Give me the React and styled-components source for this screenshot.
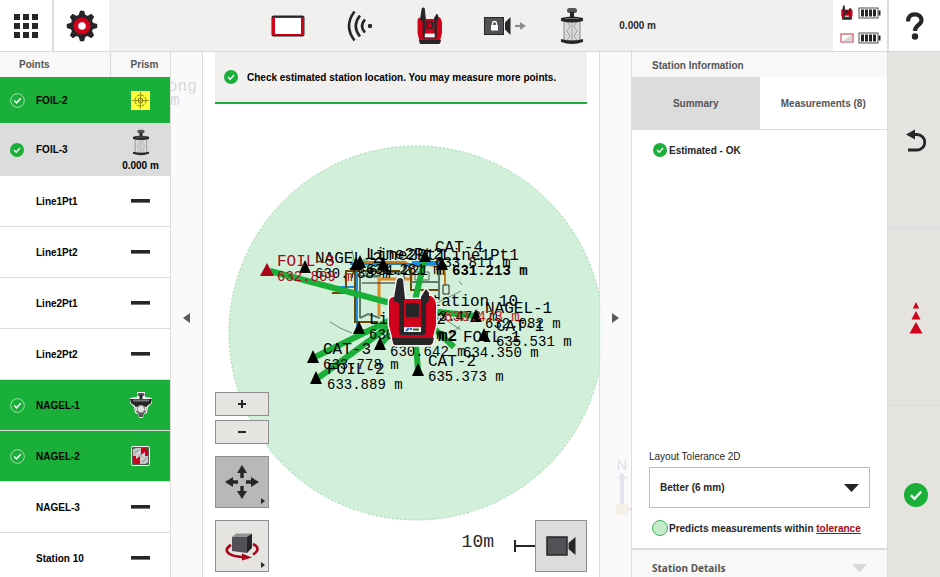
import React from 'react'
import styled, { createGlobalStyle } from 'styled-components'

const GREEN = '#1aaf38'
const RED = '#d0021b'
const DARK = '#262628'

const points = [
  { name: 'FOIL-2', state: 'measured', prism: 'foil' },
  { name: 'FOIL-3', state: 'selected', prism: 'cylinder', height: '0.000 m' },
  { name: 'Line1Pt1' },
  { name: 'Line1Pt2' },
  { name: 'Line2Pt1' },
  { name: 'Line2Pt2' },
  { name: 'NAGEL-1', state: 'measured', prism: 'mini' },
  { name: 'NAGEL-2', state: 'measured', prism: 'plate' },
  { name: 'NAGEL-3' },
  { name: 'Station 10' },
]

const labels = [
  { name: 'NAGEL-2', value: '630.788 m', x: 315, y: 263 },
  { name: 'Line2Pt2', value: '631.281 m', x: 366, y: 259 },
  { name: 'Line2Pt1', value: '631.221 m', x: 369, y: 260 },
  { name: 'CAT-4', value: '633.811 m', x: 435, y: 252 },
  { name: 'Line1Pt1', value: '', x: 442, y: 260 },
  { name: '', value: '631.213 m', x: 452, y: 260, strong: true },
  { name: 'Line1Pt2', value: '630.642 m', x: 369, y: 324 },
  { name: 'Station 10', value: '633.473 m', x: 422, y: 306 },
  { name: 'NAGEL-1', value: '632.082 m', x: 485, y: 313 },
  { name: 'CAT-1', value: '635.531 m', x: 496, y: 331 },
  { name: 'FOIL-1', value: '634.350 m', x: 463, y: 342 },
  { name: 'm2', value: '', x: 438, y: 341, strong: true },
  { name: '', value: '630.642 m', x: 390, y: 341 },
  { name: 'CAT-2', value: '635.373 m', x: 428, y: 366 },
  { name: 'CAT-3', value: '633.778 m', x: 323, y: 354 },
  { name: 'FOIL-2', value: '633.889 m', x: 327, y: 374 },
  { name: 'FOIL-3', value: '632.809 m', x: 277, y: 266, color: '#a8071a' },
  { name: '', value: '633.473 m', x: 444, y: 306, color: '#c0202a' },
]

// x is the centre of the marker, y its base line
const markers = [
  [305, 273], [356, 270], [360, 268], [383, 270], [425, 262], [442, 270],
  [476, 322], [484, 341], [418, 376], [380, 350], [359, 334], [313, 363], [316, 384],
]

const sights = [
  [270, 271], [313, 358], [318, 378], [418, 370], [425, 258], [474, 316], [454, 347], [380, 345],
]

const GridIcon = () => (
  <svg width="26" height="26" viewBox="0 0 26 26" fill={DARK} aria-hidden="true">
    {[1, 10, 19].map(y => [1, 10, 19].map(x => <rect key={x + '-' + y} x={x} y={y} width="6" height="6" />))}
  </svg>
)

const GearIcon = () => (
  <svg width="32" height="32" viewBox="-16 -16 32 32" aria-hidden="true">
    {[0, 45, 90, 135, 180, 225, 270, 315].map(a => (
      <path key={a} d="M-3.6-10L-2-15.2H2L3.6-10Z" fill={DARK} transform={`rotate(${a})`} />
    ))}
    <circle r="11.4" fill={DARK} />
    <circle r="8.6" fill={RED} />
    <circle r="3.8" fill="#fff" />
  </svg>
)

const TabletIcon = () => (
  <svg width="34" height="22" viewBox="0 0 34 22" aria-hidden="true">
    <rect x=".5" y=".5" width="33" height="21" rx="2" fill={DARK} />
    <rect x="1" y="2" width="32" height="18" rx="1" fill={RED} />
    <rect x="4" y="3" width="26" height="16" fill="#fff" />
  </svg>
)

const SignalIcon = () => (
  <svg width="26" height="32" viewBox="0 0 26 32" fill="none" stroke={DARK} strokeWidth="2.6" aria-hidden="true">
    <path d="M7.500 1.500Q-3.500 16 7.500 30.500" />
    <path d="M13 5.500Q4.500 16 13 26.500" />
    <path d="M18 9.500Q12 16 18 22.500" />
    <circle cx="23" cy="16" r="2.200" fill={DARK} stroke="none" />
  </svg>
)

const DeviceShape = () => (
  <>
    <path d="M1 26Q1 20 6 20H16V22H34V19L43 19Q48 22 48 28V48L45 60V65Q44 68 41 68H8Q5 68 5 65L4 60L1 48Z" fill={RED} />
    <path d="M6 21L9 3Q10 1 12 1Q15 1 15 3L17 22V51H33V20L36 15L38 12L41 16V23L38 27V55Q38 58 35 58H14Q11 58 11 55V26L6 24Z" fill={DARK} />
    <path d="M16 23H33V50H16Z" fill={RED} />
    <rect x="18" y="26" width="13" height="14" rx="1" fill={DARK} />
    <path d="M4 61H46L45 65Q44 68 41 68H8Q5 68 5 65Z" fill={DARK} />
    <rect x="16" y="50" width="17" height="5" fill="#f4f4f4" />
  </>
)

const DeviceIcon = () => (
  <svg width="26" height="38" viewBox="0 0 50 70" preserveAspectRatio="none" aria-hidden="true">
    <DeviceShape />
    <path d="M21 29h7v8h-7z" fill={RED} />
    <rect x="15" y="49" width="19" height="7" fill="#f4f4f4" />
  </svg>
)

const LockedCameraIcon = () => (
  <svg width="42" height="20" viewBox="0 0 42 20" aria-hidden="true">
    <rect x=".5" y="1.500" width="19" height="17" fill="#535156" stroke={DARK} />
    <path d="M21 6.500L26.500 1V19L21 13.500Z" fill={DARK} />
    <rect x="7" y="9" width="7" height="5.500" fill="#fff" />
    <path d="M8.500 9V7.500a2 2 0 0 1 4 0V9" fill="none" stroke="#fff" strokeWidth="1.300" />
    <path d="M31 10h6" stroke="#8d8d8d" strokeWidth="2.200" />
    <path d="M36 6l6 4-6 4z" fill="#8d8d8d" />
  </svg>
)

const CylinderPrism = ({ width, height }) => (
  <svg width={width} height={height} viewBox="0 0 22 38" preserveAspectRatio="none" aria-hidden="true">
    <rect x="6" y="1" width="10" height="5" rx="2.500" fill="#555459" />
    <rect x="9" y="5" width="4" height="7" fill={DARK} />
    <rect x="3" y="13" width="16" height="21" fill="#d8d8d8" stroke="#8a8a8a" />
    <path d="M6 14l3 5-3 5 3 5-3 4M11 13v20M16 14l-3 5 3 5-3 5 3 4" fill="none" stroke="#a5a5a5" />
    <path d="M0 11Q11 8 22 11V14Q11 17 0 14Z" fill={DARK} />
    <path d="M0 32Q11 35 22 32V35Q11 39 0 35Z" fill={DARK} />
    <path d="M4 11.500h14" stroke="#6b6b6f" />
  </svg>
)

const FoilPrism = () => (
  <svg width="19" height="19" viewBox="0 0 19 19" fill="none" stroke="#77740e" aria-hidden="true">
    <rect x=".5" y=".5" width="18" height="18" fill="#ffff3c" stroke="#fdfdd0" />
    <circle cx="9.500" cy="9.500" r="5.500" strokeDasharray="3 1.300" />
    <circle cx="9.500" cy="9.500" r="2.500" />
    <path d="M9.500 1v17M1 9.500h17" strokeWidth=".7" />
  </svg>
)

const MiniPrism = () => (
  <svg width="24" height="26" viewBox="0 0 24 26" aria-hidden="true">
    <path d="M8 0h8v5l7 1v5l-4 4-1 6-3 1-1 4h-4l-1-4-3-1-1-6-4-4V6l7-1z" fill="#f3f3f3" />
    <rect x="8.500" y="1" width="7" height="3" rx="1.500" fill="#555459" />
    <rect x="10.500" y="3" width="3" height="5" fill={DARK} />
    <path d="M1 7l8 0h6l8 0-1 4-4 3H6l-4-3z" fill={DARK} />
    <path d="M4 8.500h16" stroke="#77767a" strokeWidth="2" />
    <path d="M6 14h12l-1 6-2 1-1 4h-4l-1-4-2-1z" fill="#56555a" />
    <path d="M6 15l2 0v4l-1 0zM18 15l-2 0v4l1 0z" fill="#ddd" />
    <circle cx="12" cy="17" r="3.600" fill="#e3e3e3" stroke="#999" />
  </svg>
)

const PlatePrism = () => (
  <svg width="19" height="20" viewBox="0 0 19 20" aria-hidden="true">
    <rect width="19" height="20" rx="2" fill="#f4f4f4" />
    <rect x="1" y="1" width="17" height="18" rx="1" fill="#5d5555" />
    <rect x="2" y="2" width="15" height="16" fill="#c4c4c4" />
    <path d="M10 2h7v8h-7zM2 10h7v8H2z" fill={RED} />
    <path d="M5 8l4-3v5l-4 3zM10 9l4-3v5l-4 4z" fill="#d5d5d5" />
    <path d="M4 7a7 7 0 0 1 4-3M15 12a7 7 0 0 1-4 4M7 9l2 2M9 8l3 4" fill="none" stroke="#888" strokeWidth=".8" />
    <path d="M1 1h3v2H1zM15 1h3v2h-3zM1 17h3v2H1zM15 17h3v2h-3z" fill="#3c6b45" />
  </svg>
)

const prisms = {
  foil: <FoilPrism />,
  cylinder: <CylinderPrism width="16" height="27" />,
  mini: <MiniPrism />,
  plate: <PlatePrism />,
}

const CheckDot = ({ size = 14, outline }) => (
  <svg width={size} height={size} viewBox="0 0 16 16" aria-hidden="true">
    <circle cx="8" cy="8" r={outline ? 7.3 : 8} fill={GREEN} stroke={outline ? '#a9e3b3' : 'none'} strokeWidth="1" />
    <path d="M4.600 8.100l2.400 2.400 4.500-4.800" fill="none" stroke="#fff" strokeWidth="1.600" />
  </svg>
)

const BatteryIcon = () => (
  <svg width="23" height="12" viewBox="0 0 23 12" aria-hidden="true">
    <rect x="1" y="1" width="19" height="10" fill="#fff" stroke="#515151" />
    <path d="M20.500 3.500h2v5h-2z" fill={DARK} />
    <path d="M3 2.500h3v7H3zM7 2.500h3v7H7zM11 2.500h3v7h-3zM15 2.500h3v7h-3z" fill={DARK} />
  </svg>
)

const HelpIcon = () => (
  <svg width="20" height="28" viewBox="0 0 20 28" aria-hidden="true">
    <path d="M3 9.500C3 4.500 6 2.300 9.700 2.300S16.500 4.500 16.500 8.200C16.500 13 10 13 10 19" fill="none" stroke={DARK} strokeWidth="4.200" />
    <circle cx="10" cy="24.500" r="3.200" fill={DARK} />
  </svg>
)

const UndoIcon = () => (
  <svg width="20" height="24" viewBox="0 0 20 24" aria-hidden="true">
    <path d="M6 5.500H11a7.500 7.500 0 0 1 0 15.500H2" fill="none" stroke={DARK} strokeWidth="2.800" />
    <path d="M0 5.500L9 0.500V10.500Z" fill={DARK} />
  </svg>
)

const LayoutIcon = () => (
  <svg width="14" height="32" viewBox="0 0 14 32" fill={RED} aria-hidden="true">
    <path d="M7 0l3.200 6.500H3.800zM7 9l4.500 8.500h-9zM7 20l6.500 11.500H.5z" />
  </svg>
)

const PanIcon = () => (
  <svg width="36" height="36" viewBox="-18 -18 36 36" fill={DARK} aria-hidden="true">
    {[0, 90, 180, 270].map(a => (
      <path key={a} d="M0-17L5-9H1.700V-4H-1.700V-9H-5Z" transform={`rotate(${a})`} />
    ))}
  </svg>
)

const OrbitIcon = () => (
  <svg width="34" height="30" viewBox="0 0 34 30" aria-hidden="true">
    <path d="M6 14C-1 18 1 23 10 25L20 26.500" fill="none" stroke="#a8071a" strokeWidth="2.600" />
    <path d="M28 13C34 16 34 20 28 23.500" fill="none" stroke="#a8071a" strokeWidth="2.600" />
    <path d="M17 22.500l10 4-10 3z" fill="#a8071a" />
    <path d="M7 6l4-3.500h16L22 6z" fill="#939295" />
    <path d="M7 6h15v16L7 20z" fill="#535156" />
    <path d="M22 6l5-3.500V17l-5 5z" fill={DARK} />
  </svg>
)

const CameraIcon = () => (
  <svg width="30" height="20" viewBox="0 0 30 20" aria-hidden="true">
    <rect x="1" y="1" width="20" height="18" fill="#535156" stroke={DARK} strokeWidth="1.500" />
    <path d="M22.500 7L29.500 1V19L22.500 13Z" fill={DARK} />
  </svg>
)

const SitePlan = () => (
  <Plan viewBox="171 52 460 525" preserveAspectRatio="xMidYMid slice" role="img" aria-label="Site plan">
    <circle cx="416" cy="333" r="187" fill="#d2f0d9" stroke="#9dd6a8" strokeDasharray="2 2" />
    <g fill="none">
      <path d="M355 262H405L410 265H428L440 267Q445 269 445 274V285" stroke="#d07a1c" strokeWidth="2" />
      <path d="M379 316V279H411V270" stroke="#e08a2a" strokeWidth="3" />
      <path d="M350 264H440M357 264V330H372M335 287H357M412 262H440" stroke="#1a8fe0" strokeWidth="2" />
      <path d="M352 260H368M356 266H380" stroke="#22b04a" />
      <path d="M355 267V322H378M346 289V271H400M332 293H345V288M411 269V290H439" stroke="#6b4a08" strokeWidth="2" />
      <path d="M360 266V318M439 265V300M411 282H439M360 276H380V266M360 318L368 314L380 318" stroke="#5f7a68" strokeWidth="2" />
      <path d="M330 322L340 328L352 333M437 303L461 291M437 314L461 330M459 281L462 285M460 326L450 335M352 250L354 260" stroke="#6d8c76" />
      <path d="M362 283H398M404 264V292M385 272H405M443 285h6v9h-6z" stroke={DARK} />
      <path d="M366 270h12v7h-12zM386 264h20v10h-20zM415 272h14v8h-14z" stroke="#467055" />
    </g>
    <g stroke={GREEN} strokeWidth="6">
      {sights.map(([x, y]) => <line key={x + '-' + y} x1="413" y1="309" x2={x} y2={y} />)}
    </g>
    <path d="M267 263l7 13h-14z" fill="#a8071a" />
    {markers.map(([x, y]) => <path key={x + '-' + y} d={`M${x} ${y - 13}l6 13h-12z`} />)}
    {labels.map((l, i) => (
      <g key={i} fill={l.color || '#000'}>
        <PointName x={l.x} y={l.y} $strong={l.strong}>{l.name}</PointName>
        <PointValue x={l.x} y={l.y + 15} $strong={l.strong}>{l.value}</PointValue>
      </g>
    ))}
    <svg x="387" y="276" width="52" height="72" viewBox="-1 -1 52 72">
      <g stroke="#f2f2f2" strokeWidth="3" strokeLinejoin="round"><DeviceShape /></g>
      <DeviceShape />
      <path d="M18 54l3-3M22 52h2" stroke="#1a6fd0" strokeWidth="2" />
      <path d="M25 52.500h6" stroke="#1b6b2c" strokeWidth="2" />
    </svg>
    <PointName x="168" y="91">ong</PointName>
    <PointName x="170" y="105">m</PointName>
    <North x="622" y="470">N</North>
    <path d="M622 472l5 7h-3v26h-4v-26h-3z" fill="#6a6aa8" />
    <path d="M616 504h12v11h-12z" fill="#d8b878" />
    <path d="M628 509h5" stroke="#d0405a" strokeWidth="3" />
  </Plan>
)

const App = () => {
  return (
    <>
      <GlobalStyle />
      <Page>
        <TopBar>
          <TopButton aria-label="Menu"><GridIcon /></TopButton>
          <TopButton aria-label="Settings" $wide><GearIcon /></TopButton>
          <Status>
            <TabletIcon />
            <SignalIcon />
            <DeviceIcon />
            <LockedCameraIcon />
            <CylinderPrism width="22" height="38" />
            <Height>0.000 m</Height>
          </Status>
          <Batteries>
            <svg width="12" height="15" viewBox="0 0 50 70" preserveAspectRatio="none" aria-hidden="true"><DeviceShape /></svg>
            <BatteryIcon />
            <svg width="14" height="10" viewBox="0 0 14 10" aria-hidden="true">
              <rect x="1" y="1" width="12" height="8" fill="#fff" stroke="#c23345" />
              <path d="M2 8.500L12 2V8.500Z" fill="#d5d5d5" />
            </svg>
            <BatteryIcon />
          </Batteries>
          <HelpButton aria-label="Help"><HelpIcon /></HelpButton>
        </TopBar>
        <Main>
          <PointPanel>
            <PointTable>
              <thead>
                <tr>
                  <HeadCell>Points</HeadCell>
                  <HeadCell $prism>Prism</HeadCell>
                </tr>
              </thead>
              <tbody>
                {points.map(p => (
                  <PointRow key={p.name} $state={p.state}>
                    <td>
                      <NameCell>
                        <Mark>{p.state && <CheckDot outline={p.state === 'measured'} size={p.state === 'measured' ? 15 : 14} />}</Mark>
                        {p.name}
                      </NameCell>
                    </td>
                    <td>
                      <PrismCell>
                        {p.prism ? prisms[p.prism] : <Dash />}
                        {p.height}
                      </PrismCell>
                    </td>
                  </PointRow>
                ))}
              </tbody>
            </PointTable>
          </PointPanel>
          <Stage>
            <SitePlan />
            <Strip $side="right" aria-label="Collapse point list">
              <svg width="7" height="10" viewBox="0 0 7 10" aria-hidden="true"><path d="M7 0v10L0 5z" fill="#5a5a5a" /></svg>
            </Strip>
            <MapArea>
              <Notice role="status">
                <CheckDot />
                Check estimated station location. You may measure more points.
              </Notice>
              <Tools>
                <ToolColumn>
                  <ZoomButton aria-label="Zoom in">
                    <svg width="10" height="10" viewBox="0 0 10 10" aria-hidden="true"><path d="M1 5h8M5 1v8" stroke={DARK} strokeWidth="2" /></svg>
                  </ZoomButton>
                  <ZoomButton aria-label="Zoom out">
                    <svg width="10" height="10" viewBox="0 0 10 10" aria-hidden="true"><path d="M1 5h8" stroke={DARK} strokeWidth="2" /></svg>
                  </ZoomButton>
                  <ToolButton aria-label="Pan" $active $more><PanIcon /></ToolButton>
                  <ToolButton aria-label="Orbit" $more><OrbitIcon /></ToolButton>
                </ToolColumn>
                <ScaleGroup>
                  <ScaleText>10m</ScaleText>
                  <svg width="21" height="12" viewBox="0 0 21 12" aria-hidden="true"><path d="M1 0v12M1 6h20" stroke={DARK} strokeWidth="2" /></svg>
                  <CameraButton aria-label="Camera"><CameraIcon /></CameraButton>
                </ScaleGroup>
              </Tools>
            </MapArea>
            <Strip $side="left" aria-label="Collapse station information">
              <svg width="7" height="10" viewBox="0 0 7 10" aria-hidden="true"><path d="M0 0v10l7-5z" fill="#5a5a5a" /></svg>
            </Strip>
          </Stage>
          <InfoPanel>
            <InfoTitle>Station Information</InfoTitle>
            <Tabs role="tablist">
              <Tab role="tab" aria-selected="true" $active>Summary</Tab>
              <Tab role="tab" aria-selected="false">Measurements (8)</Tab>
            </Tabs>
            <Summary>
              <Result><CheckDot />Estimated - OK</Result>
              <Tolerance>
                <label htmlFor="tolerance">Layout Tolerance 2D</label>
                <SelectBox>
                  <Select id="tolerance" defaultValue="better">
                    <option value="better">Better (6 mm)</option>
                  </Select>
                  <svg width="15" height="8" viewBox="0 0 15 8" aria-hidden="true"><path d="M0 0h15L7.500 8z" fill={DARK} /></svg>
                </SelectBox>
              </Tolerance>
              <Prediction>
                <Ring />
                <span>Predicts measurements within <a href="#tolerance">tolerance</a></span>
              </Prediction>
            </Summary>
            <Details>
              Station Details
              <svg width="15" height="8" viewBox="0 0 15 8" aria-hidden="true"><path d="M0 0h15L7.500 8z" fill="#d8d8d8" /></svg>
            </Details>
          </InfoPanel>
          <Rail>
            <RailButton aria-label="Back"><UndoIcon /></RailButton>
            <RailButton aria-label="Layout"><LayoutIcon /></RailButton>
            <RailButton aria-label="Confirm"><CheckDot size={24} /></RailButton>
          </Rail>
        </Main>
      </Page>
    </>
  )
}

const GlobalStyle = createGlobalStyle`
  * {
    box-sizing: border-box;
  }
  body {
    margin: 0;
    overflow: hidden;
    background: #fff;
    color: ${DARK};
    font: bold 10px "Liberation Sans", Arial, sans-serif;
  }
  button {
    padding: 0;
    border: 0;
    background: none;
    color: inherit;
    font: inherit;
  }
  svg {
    display: block;
    flex: none;
  }
`
const Page = styled.div`
    height: 100vh;
    display: flex;
    flex-direction: column;
`
const TopBar = styled.header`
    flex: none;
    height: 52px;
    display: flex;
    background: #f2f0ef;
    border-bottom: 1px solid #d9d9d9;
`
const TopButton = styled.button`
    width: ${p => (p.$wide ? '55px' : '54px')};
    display: flex;
    align-items: center;
    justify-content: center;
    background: #fff;
    border-right: ${p => (p.$wide ? '0' : '2px solid #dcdcdc')};
`
const Status = styled.div`
    flex: 1;
    display: grid;
    grid-template-columns: 72px 72px 68px 82px 52px 58px;
    align-items: center;
    justify-items: center;
    justify-content: center;
    padding-right: 34px;
`
const Height = styled.span`
    justify-self: end;
`
const Batteries = styled.div`
    width: 54px;
    display: grid;
    grid-template-columns: 14px 23px;
    align-content: space-between;
    justify-content: center;
    align-items: center;
    justify-items: center;
    column-gap: 4px;
    padding: 5px 0 7px;
    background: #fff;
`
const HelpButton = styled.button`
    width: 53px;
    display: flex;
    align-items: center;
    justify-content: center;
    background: #fff;
    border-left: 2px solid #dcdcdc;
`
const Main = styled.main`
    flex: 1;
    min-height: 0;
    display: flex;
`
const PointPanel = styled.section`
    flex: none;
    width: 171px;
    overflow: hidden;
    border-right: 1px solid #dcdcdc;
`
const PointTable = styled.table`
    width: 100%;
    table-layout: fixed;
    border-collapse: separate;
    border-spacing: 0;
    td {
      padding: 0;
      border-bottom: 1px solid #dcdcdc;
    }
`
const HeadCell = styled.th`
    width: ${p => (p.$prism ? '59px' : '111px')};
    height: 25px;
    padding: ${p => (p.$prism ? '0 0 0 8px' : '0 0 0 19px')};
    background: #f8f8f8;
    border-right: ${p => (p.$prism ? '0' : '1px solid #dcdcdc')};
    color: #555;
    text-align: ${p => (p.$prism ? 'center' : 'left')};
`
const rowColor = { measured: GREEN, selected: '#dcdcdc' }
const PointRow = styled.tr`
    height: 51px;
    background: ${p => rowColor[p.$state] || '#fff'};
    color: #000;
    &:first-child {
      height: 47px;
    }
    &:nth-child(2) {
      height: 52px;
    }
`
const NameCell = styled.div`
    display: flex;
    align-items: center;
`
const Mark = styled.span`
    width: 36px;
    padding-left: 10px;
`
const PrismCell = styled.div`
    display: flex;
    flex-direction: column;
    align-items: center;
    gap: 4px;
`
const Dash = styled.span`
    width: 19px;
    height: 4px;
    background: ${DARK};
    border-bottom: 1px solid #777;
`
const Stage = styled.section`
    flex: 1;
    min-width: 0;
    display: flex;
    position: relative;
    overflow: hidden;
`
const Plan = styled.svg`
    position: absolute;
    inset: 0;
    width: 100%;
    height: 100%;
`
const PointName = styled.text`
    font: 16px "Liberation Mono", monospace;
    font-weight: ${p => (p.$strong ? 'bold' : 'normal')};
`
const PointValue = styled.text`
    font: 14px "Liberation Mono", monospace;
    font-weight: ${p => (p.$strong ? 'bold' : 'normal')};
`
const North = styled.text`
    font: bold 15px "Liberation Sans", sans-serif;
    fill: #6a6aa8;
    text-anchor: middle;
`
const Strip = styled.button`
    z-index: 1;
    flex: none;
    width: 32px;
    display: flex;
    align-items: center;
    justify-content: center;
    padding-top: 6px;
    background: rgba(249, 249, 249, 0.86);
    border-${p => p.$side}: 1px solid #dcdcdc;
`
const MapArea = styled.div`
    z-index: 1;
    flex: 1;
    display: flex;
    flex-direction: column;
    justify-content: space-between;
    padding: 0 12px 5px;
`
const Notice = styled.div`
    height: 52px;
    display: flex;
    align-items: center;
    gap: 9px;
    padding-left: 9px;
    background: #f2f0ef;
    border-bottom: 2px solid ${GREEN};
    color: #000;
`
const Tools = styled.div`
    display: flex;
    align-items: flex-end;
    justify-content: space-between;
`
const ToolColumn = styled.div`
    display: flex;
    flex-direction: column;
`
const ToolButton = styled.button`
    width: 54px;
    height: 52px;
    display: flex;
    align-items: center;
    justify-content: center;
    position: relative;
    margin-top: 12px;
    background: ${p => (p.$active ? '#b8b8b8' : '#e6e4e1')};
    border: 1px solid #8f8f93;
    &::after {
      content: '';
      display: ${p => (p.$more ? 'block' : 'none')};
      position: absolute;
      right: 3px;
      bottom: 3px;
      border: 3px solid transparent;
      border-left: 4px solid ${DARK};
      border-right: 0;
    }
`
const ZoomButton = styled(ToolButton)`
    height: 24px;
    margin-top: 4px;
`
const CameraButton = styled(ToolButton)`
    width: 52px;
    margin: 0;
    background: #dcdcdc;
`
const ScaleGroup = styled.div`
    display: flex;
    align-items: center;
`
const ScaleText = styled.span`
    margin-right: 20px;
    padding-bottom: 8px;
    font: 18px "Liberation Mono", monospace;
`
const InfoPanel = styled.section`
    flex: none;
    width: 257px;
    display: flex;
    flex-direction: column;
    border: solid #dcdcdc;
    border-width: 0 1px;
`
const InfoTitle = styled.h2`
    flex: none;
    height: 25px;
    margin: 0;
    padding-left: 20px;
    background: #f8f8f8;
    color: #555;
    font-size: 10px;
    line-height: 27px;
`
const Tabs = styled.div`
    flex: none;
    height: 53px;
    display: flex;
    border-bottom: 1px solid #dcdcdc;
`
const Tab = styled.button`
    flex: 1;
    background: ${p => (p.$active ? '#dcdcdc' : '#fff')};
    color: #555;
`
const Summary = styled.div`
    flex: 1;
    display: flex;
    flex-direction: column;
    padding: 13px 17px 12px;
`
const Result = styled.div`
    display: flex;
    align-items: center;
    gap: 2px;
    padding-left: 4px;
`
const Tolerance = styled.div`
    display: flex;
    flex-direction: column;
    gap: 5px;
    margin-top: auto;
    font-weight: normal;
`
const SelectBox = styled.div`
    display: grid;
    align-items: center;
    svg {
      grid-area: 1 / 1;
      justify-self: end;
      margin-right: 11px;
      pointer-events: none;
    }
`
const Select = styled.select`
    grid-area: 1 / 1;
    height: 41px;
    padding: 0 10px;
    appearance: none;
    background: #fff;
    border: 1px solid #bdbdbd;
    border-radius: 0;
    color: ${DARK};
    font: inherit;
    font-weight: bold;
`
const Prediction = styled.div`
    display: flex;
    align-items: center;
    gap: 1px;
    margin-top: 12px;
    padding-left: 3px;
    white-space: nowrap;
    a {
      color: #a8071a;
    }
`
const Ring = styled.span`
    flex: none;
    width: 16px;
    height: 16px;
    background: #c5ebcd;
    border: 1px solid #3fb757;
    border-radius: 50%;
`
const Details = styled.div`
    flex: none;
    height: 29px;
    display: flex;
    align-items: center;
    justify-content: space-between;
    padding: 9px 20px 0;
    background: #f8f8f8;
    border-top: 2px solid #dcdcdc;
    color: #555;
    font: bold 10px "Open Sans", sans-serif;
`
const Rail = styled.nav`
    flex: none;
    width: 52px;
    display: flex;
    flex-direction: column;
    overflow: hidden;
    background: #e5e3df;
`
const RailButton = styled.button`
    flex: 0 0 177px;
    display: flex;
    align-items: center;
    justify-content: center;
    padding: 2px 0 0 3px;
    border-bottom: 1px solid #dadada;
`

export default App
